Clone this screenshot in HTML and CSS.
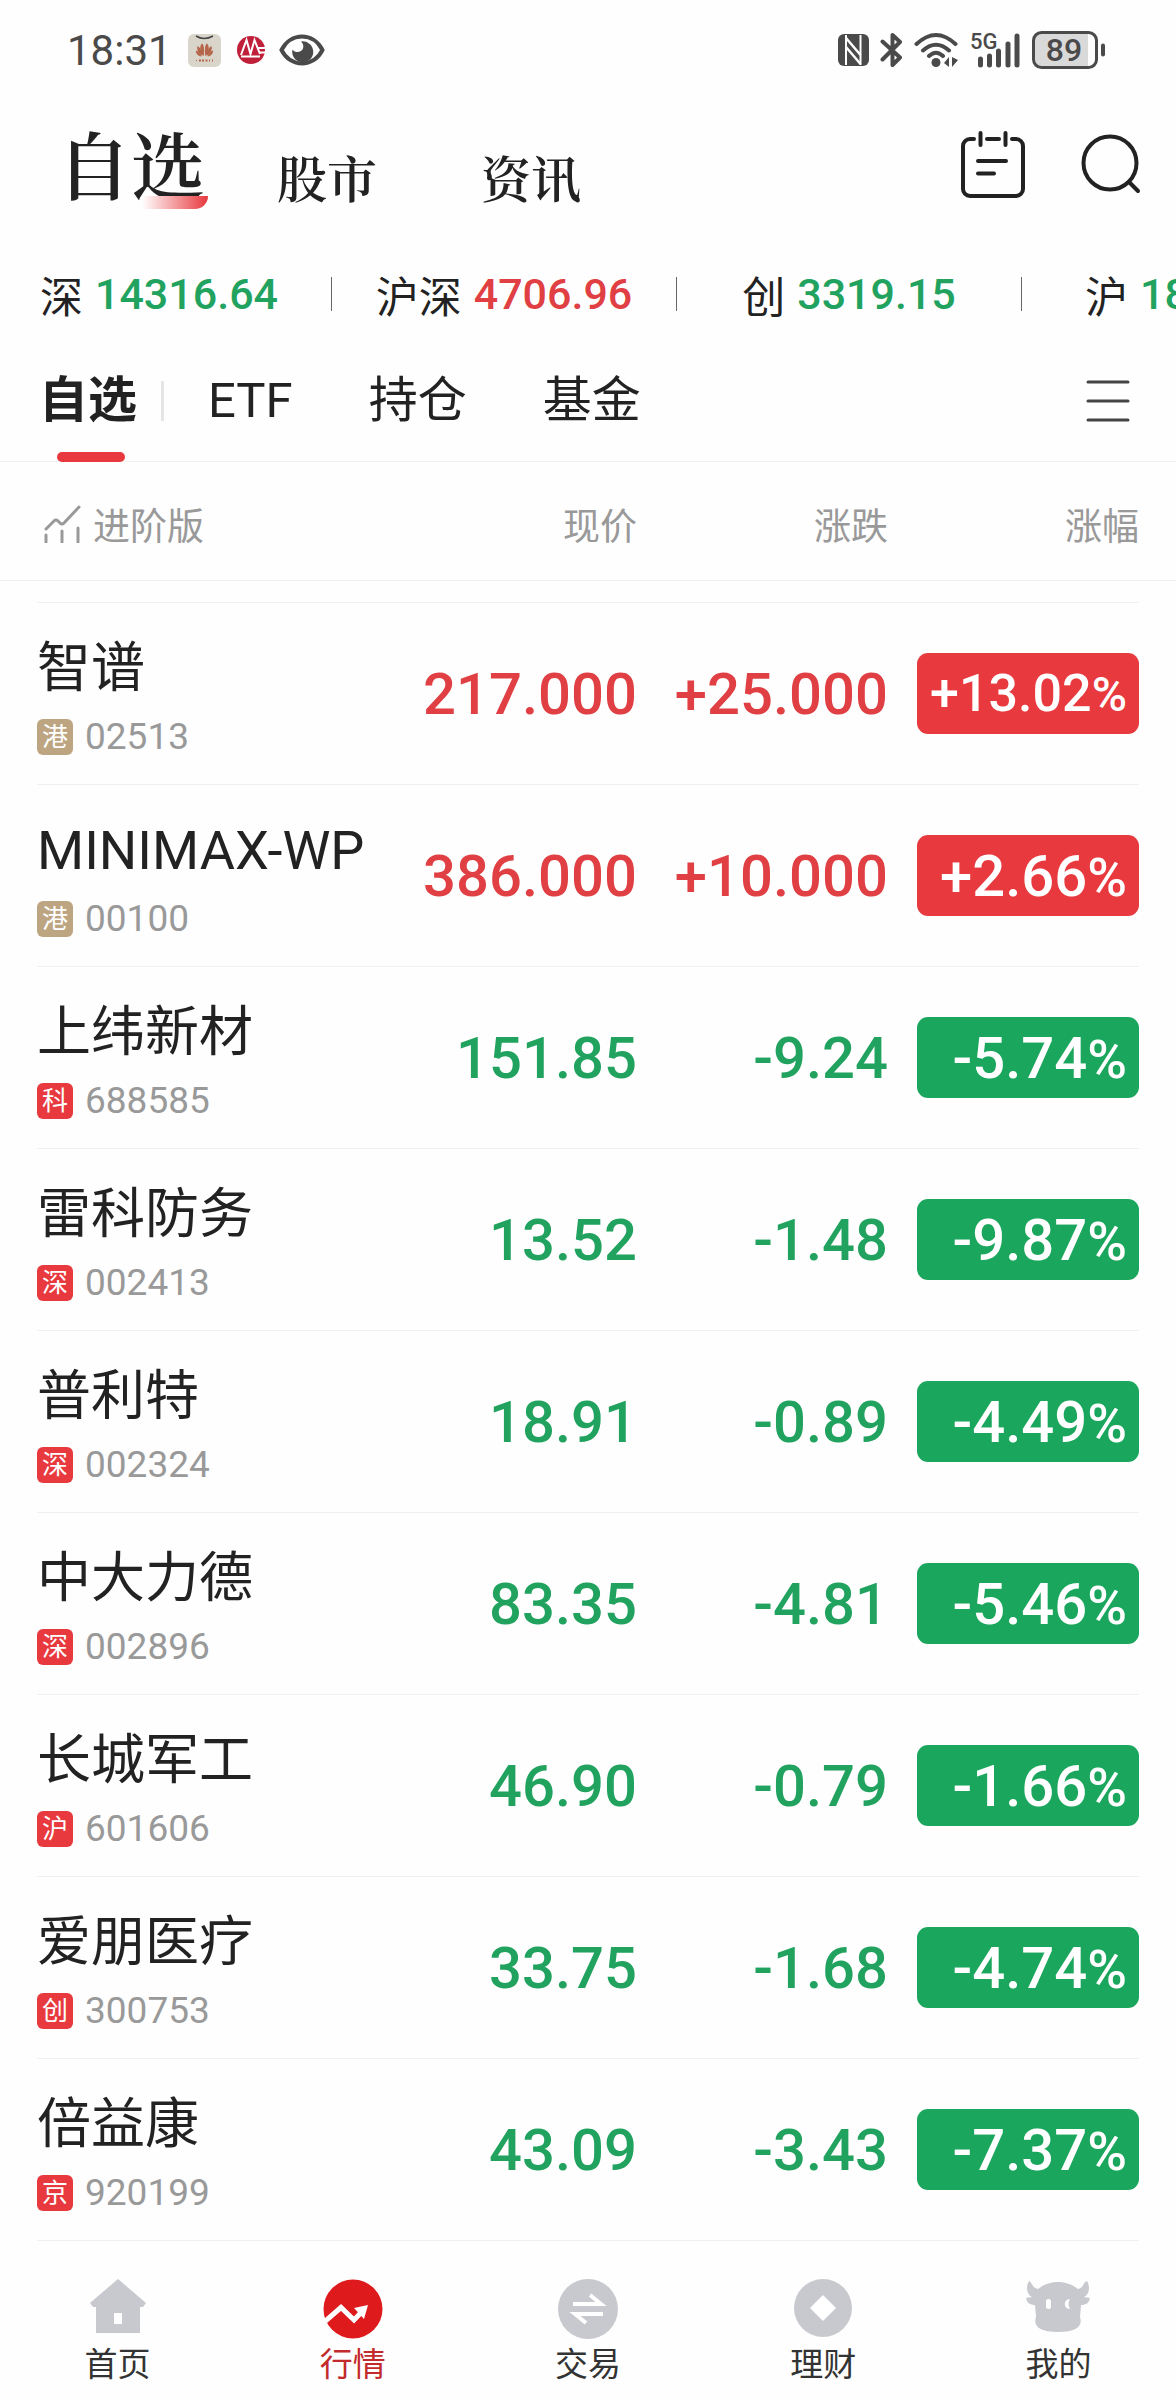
FILE: index.html
```
<!DOCTYPE html>
<html lang="zh-CN">
<head>
    <meta charset="utf-8">
    <meta name="viewport" content="width=device-width, initial-scale=1">
    <title>自选</title>
    <link rel="stylesheet" href="styles.css">
</head>
<body>
<div class="status">
    <span class="time">18:31</span>
    <svg class="s-app" width="33" height="33" viewBox="0 0 33 33">
        <rect width="33" height="33" rx="6" fill="#d9d5cb"/>
        <path d="M8 2 Q16 7 25 2" fill="none" stroke="#444" stroke-width="1.5"/>
        <g fill="#b5664a">
            <path d="M15.800 22C12 19 11 12 14 9.500c2 1 2.500 6 1.800 12.500zM17.200 22C21 19 22 12 19 9.500c-2 1-2.500 6-1.800 12.500z"/>
            <path d="M14.500 22C10 19.500 8.500 15 9.500 12c3 1.500 4.500 5 5 10zM18.500 22c4.500-2.500 6-7 5-10-3 1.500-4.500 5-5 10z"/>
            <path d="M13.500 22.500C9.500 22 7.500 19 8 16.500c2.500.8 4.500 3 5.500 6zM19.500 22.500c4-.5 6-3.500 5.500-6-2.500.8-4.500 3-5.500 6z"/>
            <path d="M8 26h1v1H8zM11 25.500h2v2h-2zM14 25.500h2v2h-2zM17.500 25.500h2v2h-2zM21 25.500h1v2h-1zM24 25.500h1v2h-1z"/>
        </g>
    </svg>
    <svg class="s-bank" width="30" height="30" viewBox="0 0 30 30">
        <circle cx="15" cy="15" r="14" fill="#c01f39"/>
        <path d="M5 20 10.500 5 14.500 19 18.500 5 24 19" fill="none" stroke="#fff" stroke-width="2"/>
        <path d="M5 21.500h19M22 13h8M23 17.500h7" stroke="#fff" stroke-width="2"/>
    </svg>
    <svg class="s-eye" width="46" height="32" viewBox="0 0 46 32">
        <path d="M2.500 16C7 7 15 2.500 23 2.500S39 7 43.500 16C39 25 31 29.500 23 29.500S7 25 2.500 16z" fill="none" stroke="#4a4a4a" stroke-width="4"/>
        <path d="M22 7.500a10.500 10.500 0 1 1-8.500 8c3 4 9 3 10.500-1 .9-2.600 0-5.200-2-7z" fill="#4a4a4a"/>
    </svg>
    <span class="status-right">
        <svg class="s-nfc" width="31" height="32" viewBox="0 0 31 32">
            <rect width="31" height="32" rx="6" fill="#4a4a4a"/>
            <path d="M8 1v30M22.500 1v30" stroke="#fefefe" stroke-width="2"/>
            <path d="M8 4 22.500 21M8 13 22.500 30" stroke="#fefefe" stroke-width="2.500"/>
        </svg>
        <svg class="s-bt" width="23" height="36" viewBox="0 0 23 36">
            <path d="M2.500 9.500 20 25.500 12.500 33V3L20 10 2.500 27.500" fill="none" stroke="#4a4a4a" stroke-width="4" stroke-linecap="round" stroke-linejoin="round"/>
        </svg>
        <svg class="s-wifi" width="45" height="36" viewBox="0 0 45 36">
            <g fill="none" stroke="#4a4a4a" stroke-width="4" stroke-linecap="round">
                <path d="M2.500 12Q22 -6 41.500 12M9 18.500Q22 7 35 18.500M15 24Q22 17.500 29 24"/>
            </g>
            <circle cx="22" cy="30.500" r="4.500" fill="#4a4a4a"/>
            <path d="M35 25v10l-5-4zM38 25v10l6-7z" fill="#4a4a4a"/>
        </svg>
        <svg class="s-signal" width="51" height="44" viewBox="0 -4 51 44">
            <text x="0" y="17" class="net">5G</text>
            <path d="M10.500 27v6M19.500 24v9M28.500 19v14M38 12v21M47 4v29" stroke="#4a4a4a" stroke-width="5" stroke-linecap="round"/>
        </svg>
        <svg class="s-battery" width="74" height="38" viewBox="0 0 74 38">
            <path d="M9 2h47v34H9a7 7 0 0 1-7-7V9a7 7 0 0 1 7-7z" fill="#d9d9d9"/>
            <rect x="1.500" y="1.500" width="63" height="35" rx="8" fill="none" stroke="#4a4a4a" stroke-width="3"/>
            <path d="M71 14.500v9" stroke="#4a4a4a" stroke-width="4" stroke-linecap="round"/>
            <text x="32" y="30" class="level">89</text>
        </svg>
    </span>
</div>

<header class="top">
    <a href="#" class="top-link active">自选</a>
    <a href="#" class="top-link">股市</a>
    <a href="#" class="top-link">资讯</a>
    <div class="top-icons">
        <button type="button" aria-label="日历">
            <svg width="64" height="68" viewBox="0 0 64 68">
                <g fill="none" stroke="#222" stroke-width="4" stroke-linecap="round">
                    <path d="M13 9H9a7 7 0 0 0-7 7v43a7 7 0 0 0 7 7h46a7 7 0 0 0 7-7V16a7 7 0 0 0-7-7h-4M26 9h12M19.500 3v12M44.500 3v12M17 31h28M17 43.500h16"/>
                </g>
            </svg>
        </button>
        <button type="button" aria-label="搜索">
            <svg width="60" height="60" viewBox="0 0 60 60">
                <circle cx="29" cy="29" r="26.500" fill="none" stroke="#222" stroke-width="4"/>
                <path d="M48 48l9 9" stroke="#222" stroke-width="4" stroke-linecap="round"/>
            </svg>
        </button>
    </div>
</header>

<div class="ticker">
    <a href="#" class="index">深 <b class="down">14316.64</b></a>
    <a href="#" class="index">沪深 <b class="up">4706.96</b></a>
    <a href="#" class="index">创 <b class="down">3319.15</b></a>
    <a href="#" class="index cut">沪 <b class="down">18</b></a>
</div>

<nav class="tabs">
    <a href="#" class="tab active">自选</a>
    <span class="bar"></span>
    <a href="#" class="tab">ETF</a>
    <a href="#" class="tab">持仓</a>
    <a href="#" class="tab">基金</a>
    <button type="button" class="menu" aria-label="菜单">
        <svg width="44" height="44" viewBox="0 0 44 44">
            <path d="M2 3h40M2 22h40M2 41h40" stroke="#444" stroke-width="3" stroke-linecap="round"/>
        </svg>
    </button>
</nav>

<main>
    <table class="stocks">
        <thead>
        <tr>
            <th class="col-name">
                <button type="button" class="pro">
                    <svg width="38" height="38" viewBox="0 0 38 38">
                        <path d="M3 24l8-8q2-2 4 0l2 2q2 2 4 0L36 2M3 30v7M19 26v11M35 23v14" fill="none" stroke="#999" stroke-width="3" stroke-linecap="round"/>
                    </svg>
                    进阶版
                </button>
            </th>
            <th>现价</th>
            <th>涨跌</th>
            <th>涨幅</th>
        </tr>
        </thead>
        <tbody>
        <tr class="up">
            <td><div class="name">智谱</div><div class="code"><i class="hk">港</i>02513</div></td>
            <td>217.000</td>
            <td>+25.000</td>
            <td><span class="rate long">+13.02<small>%</small></span></td>
        </tr>
        <tr class="up">
            <td><div class="name">MINIMAX-WP</div><div class="code"><i class="hk">港</i>00100</div></td>
            <td>386.000</td>
            <td>+10.000</td>
            <td><span class="rate">+2.66<small>%</small></span></td>
        </tr>
        <tr class="down">
            <td><div class="name">上纬新材</div><div class="code"><i>科</i>688585</div></td>
            <td>151.85</td>
            <td>-9.24</td>
            <td><span class="rate">-5.74<small>%</small></span></td>
        </tr>
        <tr class="down">
            <td><div class="name">雷科防务</div><div class="code"><i>深</i>002413</div></td>
            <td>13.52</td>
            <td>-1.48</td>
            <td><span class="rate">-9.87<small>%</small></span></td>
        </tr>
        <tr class="down">
            <td><div class="name">普利特</div><div class="code"><i>深</i>002324</div></td>
            <td>18.91</td>
            <td>-0.89</td>
            <td><span class="rate">-4.49<small>%</small></span></td>
        </tr>
        <tr class="down">
            <td><div class="name">中大力德</div><div class="code"><i>深</i>002896</div></td>
            <td>83.35</td>
            <td>-4.81</td>
            <td><span class="rate">-5.46<small>%</small></span></td>
        </tr>
        <tr class="down">
            <td><div class="name">长城军工</div><div class="code"><i>沪</i>601606</div></td>
            <td>46.90</td>
            <td>-0.79</td>
            <td><span class="rate">-1.66<small>%</small></span></td>
        </tr>
        <tr class="down">
            <td><div class="name">爱朋医疗</div><div class="code"><i>创</i>300753</div></td>
            <td>33.75</td>
            <td>-1.68</td>
            <td><span class="rate">-4.74<small>%</small></span></td>
        </tr>
        <tr class="down">
            <td><div class="name">倍益康</div><div class="code"><i>京</i>920199</div></td>
            <td>43.09</td>
            <td>-3.43</td>
            <td><span class="rate">-7.37<small>%</small></span></td>
        </tr>
        </tbody>
    </table>
</main>

<nav class="bottom">
    <a href="#">
        <svg width="60" height="60" viewBox="0 0 60 60">
            <path d="M30 0 58 24l-3 4h-3v26H8V28H5l-3-4zM26 34v11h8V34z" fill="#c8c9cf" fill-rule="evenodd"/>
        </svg>
        首页
    </a>
    <a href="#" class="active">
        <svg width="60" height="60" viewBox="0 0 60 60">
            <circle cx="30" cy="30" r="29.500" fill="#df1a1d"/>
            <path d="M0 44 18 28.500 31 41 40 31.500" fill="none" stroke="#fff" stroke-width="5"/>
            <path d="M31 29 45 26 41 40z" fill="#fff"/>
        </svg>
        行情
    </a>
    <a href="#">
        <svg width="60" height="60" viewBox="0 0 60 60">
            <circle cx="30" cy="30" r="30" fill="#c8c9cf"/>
            <path d="M15 25h28L32 16M45 35H17l11 9" fill="none" stroke="#fff" stroke-width="4"/>
        </svg>
        交易
    </a>
    <a href="#">
        <svg width="60" height="60" viewBox="0 0 60 60">
            <circle cx="30" cy="29" r="29" fill="#c8c9cf"/>
            <path d="M30 16 43 29 30 42 17 29z" fill="#fff"/>
        </svg>
        理财
    </a>
    <a href="#">
        <svg width="66" height="60" viewBox="0 0 66 60">
            <path d="M4 2c3 1 3 7 9 8 5-4 12-7 20-7s15 3 20 7c6-1 5-7 9-8 3 5 3 13-3 16l6 1c-1 5-4 7-9 7l-1 12c3 9-3 15-22 15S8 47 11 38L10 26c-5 0-8-2-9-7l6-1C1 15 1 7 4 2z" fill="#c8c9cf"/>
            <rect x="21" y="20" width="5" height="10" rx="2.500" fill="#fff"/>
            <path d="M45 20c-7 0-7 10 0 10-2-3-2-7 0-10z" fill="#fff"/>
        </svg>
        我的
    </a>
</nav>
</body>
</html>
```
FILE: styles.css
```
*{
    box-sizing: border-box;
}
body{
    margin: 0;
    background: #fefefe;
    color: #222;
    font-family: Roboto, "Noto Sans CJK SC", sans-serif;
    overflow-x: hidden;
}
a{
    color: inherit;
    text-decoration: none;
}
button{
    border: 0;
    padding: 0;
    background: none;
    color: inherit;
    font: inherit;
    cursor: pointer;
}
svg{
    display: block;
    flex: none;
}
.up{
    color: #e03f43;
}
.down{
    color: #21a35f;
}

/* status bar */
.status{
    display: flex;
    align-items: center;
    height: 100px;
    padding: 0 70px 0 67px;
    color: #4a4a4a;
}
.time{
    font-size: 42px;
    margin-right: 16px;
}
.s-bank{
    margin: 0 13px 0 15px;
}
.status-right{
    display: flex;
    align-items: center;
    gap: 11px;
    margin-left: auto;
}
.net{
    font-size: 22px;
    font-weight: 500;
    fill: #4a4a4a;
}
.level{
    font-size: 32px;
    font-weight: 500;
    text-anchor: middle;
    fill: #4a4a4a;
}

/* page header */
.top{
    display: flex;
    align-items: flex-end;
    height: 114px;
    padding: 0 35px 0 57px;
    font-family: "Noto Serif CJK SC", "Source Han Serif SC", "Noto Sans CJK SC", serif;
    font-weight: 600;
}
.top-link{
    font-size: 50px;
    line-height: 76px;
    margin-right: 104px;
}
.top-link.active{
    position: relative;
    font-size: 74px;
    line-height: 104px;
    margin-right: 72px;
}
.top-link.active::after{
    content: "";
    position: absolute;
    right: -3px;
    bottom: 5px;
    width: 66px;
    height: 13px;
    border-radius: 0 0 16px 0;
    background: linear-gradient(to right, #fff, #e8393e);
}
.top-icons{
    display: flex;
    align-items: center;
    gap: 56px;
    margin-left: auto;
    padding-bottom: 16px;
}

/* index ticker */
.ticker{
    display: flex;
    align-items: center;
    height: 160px;
    margin-left: -13px;
    overflow: hidden;
}
.index{
    flex: none;
    display: flex;
    justify-content: center;
    align-items: center;
    gap: 12px;
    width: 345px;
    height: 34px;
    border-right: 1px solid #666;
    font-size: 43px;
    white-space: nowrap;
}
.index b{
    font-weight: 500;
}
.index.cut{
    justify-content: flex-start;
    padding-left: 63px;
    border: 0;
}

/* group tabs */
.tabs{
    display: flex;
    align-items: center;
    height: 88px;
    padding: 0 46px 33px 39px;
    border-bottom: 1px solid #f1f1f1;
    font-size: 49px;
    line-height: 54px;
}
.tab{
    margin-right: 76px;
}
.tab.active{
    position: relative;
    font-weight: 700;
    margin-right: 24px;
}
.tab.active::after{
    content: "";
    position: absolute;
    left: 18px;
    bottom: -34px;
    width: 68px;
    height: 10px;
    border-radius: 5px;
    background: #e8393e;
}
.bar{
    width: 3px;
    height: 40px;
    margin-right: 44px;
    background: #e5e5e5;
}
.menu{
    margin-left: auto;
}

/* stock list */
main{
    position: relative;
    padding: 0 37px;
}
/* full-width rule under the column titles */
main::before{
    content: "";
    position: absolute;
    left: 0;
    right: 0;
    top: 118px;
    height: 1px;
    background: #f1f1f1;
}
.stocks{
    width: 100%;
    table-layout: fixed;
    border-collapse: separate;
    border-spacing: 0;
}
.stocks th{
    width: 251px;
    height: 141px;
    padding: 6px 0 22px;
    border-bottom: 1px solid #f1f1f1;
    color: #999;
    font-size: 37px;
    font-weight: 400;
    text-align: right;
}
.stocks .col-name{
    width: auto;
    text-align: left;
}
.pro{
    display: flex;
    align-items: center;
    gap: 12px;
    padding-left: 6px;
}
.stocks td{
    height: 182px;
    padding: 0;
    border-bottom: 1px solid #f1f1f1;
    font-size: 58px;
    font-weight: 500;
    text-align: right;
    white-space: nowrap;
}
.stocks td:first-child{
    padding-top: 10px;
    color: #222;
    font-weight: 400;
    text-align: left;
}
.name{
    font-size: 54px;
    line-height: 60px;
}
.code{
    display: flex;
    align-items: center;
    gap: 12px;
    height: 44px;
    margin-top: 16px;
    color: #999;
    font-size: 37px;
}
.code i{
    width: 36px;
    height: 36px;
    border-radius: 6px;
    background: #e8393e;
    color: #fff;
    font-size: 26px;
    font-style: normal;
    line-height: 36px;
    text-align: center;
}
.code .hk{
    background: #bda582;
}
.rate{
    display: flex;
    justify-content: flex-end;
    align-items: baseline;
    width: 222px;
    height: 81px;
    margin-left: auto;
    padding-right: 12px;
    border-radius: 11px;
    background: #e8393e;
    color: #fff;
    line-height: 82px;
}
.rate small{
    font-size: 54px;
}
.rate.long{
    font-size: 52px;
}
.rate.long small{
    font-size: 48px;
}
.down .rate{
    background: #1aa65c;
}

/* bottom navigation */
.bottom{
    display: grid;
    grid-template-columns: repeat(5, 1fr);
    height: 158px;
    padding-top: 38px;
    font-size: 33px;
    line-height: 52px;
}
.bottom a{
    display: flex;
    flex-direction: column;
    align-items: center;
    color: #333;
}
.bottom .active{
    color: #c22a2c;
}
```
